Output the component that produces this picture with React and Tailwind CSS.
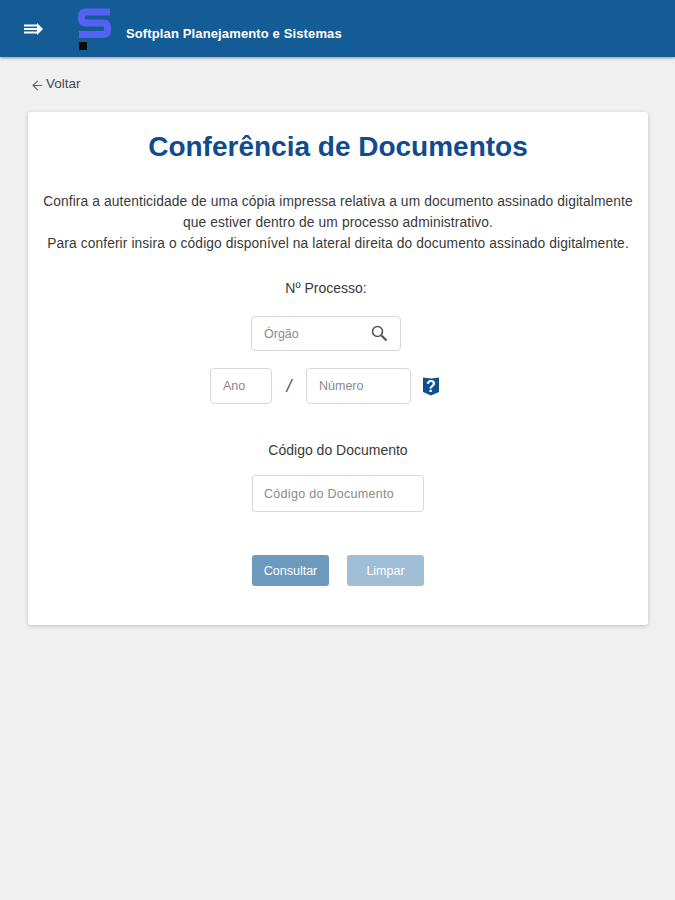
import { ArrowLeft } from 'lucide-react';

function Logo() {
  return (
    <svg width="36" height="45" viewBox="0 0 36 45" className="shrink-0">
      <path d="M34 6H10Q5.500 6 5.500 10.500V12.500Q5.500 17 10 17H27Q31.500 17 31.500 21.500V24Q31.500 28.500 27 28.500H3" fill="none" stroke="#5560f5" strokeWidth="7" />
      <rect x="3" y="36" width="8" height="8" fill="#0a0a0a" />
    </svg>
  );
}

function MenuIcon() {
  return (
    <svg width="20" height="15" viewBox="0 0 20 15" className="shrink-0">
      <path d="M1 4.500h13M1 8h14M1 11.500h13" stroke="#fff" strokeWidth="2" fill="none" />
      <path d="M14 2l6 6-6 6z" fill="#fff" />
    </svg>
  );
}

function HelpIcon() {
  return (
    <svg width="18" height="20" viewBox="0 0 18 20" className="shrink-0">
      <path d="M1 1.500 9 2.500l8-1V16l-8 3.500L1 16z" fill="#10508f" />
      <text x="9" y="15.500" textAnchor="middle" fontSize="16" fontWeight="700" fill="#fff" fontFamily="Liberation Sans, sans-serif">?</text>
    </svg>
  );
}

function SearchIcon() {
  return (
    <svg width="17" height="17" viewBox="0 0 17 17" className="shrink-0">
      <circle cx="6.500" cy="6.500" r="5" fill="none" stroke="#555" strokeWidth="1.600" />
      <path d="M10.500 10.500 15.500 15.500" stroke="#555" strokeWidth="2.200" />
    </svg>
  );
}

export default function App() {
  return (
    <div className="min-h-[900px] bg-[#f0f0f0] font-['Liberation_Sans',Arial,sans-serif] text-[#3a3a3a]">
      <header className="flex h-[57px] items-center bg-[#135c96] pl-[23px] shadow-[0_1px_3px_rgba(0,0,0,0.4)]">
        <MenuIcon />
        <div className="ml-[33px]">
          <Logo />
        </div>
        <span className="ml-[14px] mt-[10px] text-[13px] font-bold tracking-[0.13px] text-white">
          Softplan Planejamento e Sistemas
        </span>
      </header>

      <div className="pt-[18px] pr-[27px] pl-[28px]">
        <div className="flex h-[18px] items-center gap-[1px] pl-[2px] text-[#4a4a4a]">
          <ArrowLeft size={15} strokeWidth={1.7} className="mt-[2px] text-[#666]" />
          <span className="text-[13.5px]">Voltar</span>
        </div>

        <main className="mt-[19px] flex h-[513px] flex-col items-center rounded-[3px] bg-white pt-[17px] shadow-[0_1px_4px_rgba(0,0,0,0.2)]">
          <h1 className="text-[28px] leading-[36px] font-bold text-[#0f4c8f]">Conferência de Documentos</h1>

          <div className="mt-[26px] text-center text-[13.800px] leading-[21px] tracking-[0.1px]">
            <p>Confira a autenticidade de uma cópia impressa relativa a um documento assinado digitalmente</p>
            <p>que estiver dentro de um processo administrativo.</p>
            <p>Para conferir insira o código disponível na lateral direita do documento assinado digitalmente.</p>
          </div>

          <p className="mt-[25px] mr-[24px] text-sm leading-[18px]">Nº Processo:</p>

          <div className="mt-[19px] mr-[24px] flex h-[35px] w-[150px] items-center justify-between rounded-[4px] border border-[#d8d8d8] pr-[12px] pl-[12px] text-[12.500px] text-[#8a8a8a]">
            <span className="pt-[2px]">Órgão</span>
            <SearchIcon />
          </div>

          <div className="mt-[17px] mr-[26px] flex items-center">
            <div className="flex h-[36px] w-[62px] items-center rounded-[4px] border border-[#d8d8d8] pt-[1px] pl-[12px] text-[12.500px] text-[#8a8a8a]">Ano</div>
            <span className="w-[34px] text-center text-lg italic text-[#555]">/</span>
            <div className="flex h-[36px] w-[105px] items-center rounded-[4px] border border-[#d8d8d8] pt-[1px] pl-[12px] text-[12.500px] text-[#8a8a8a]">Número</div>
            <div className="ml-[11px]">
              <HelpIcon />
            </div>
          </div>

          <p className="mt-[37px] text-sm leading-[18px]">Código do Documento</p>

          <div className="mt-[16px] flex h-[37px] w-[172px] items-center rounded-[3px] border border-[#d8d8d8] pt-[1px] pl-[11px] text-[12.500px] tracking-[0.3px] text-[#8a8a8a]">
            Código do Documento
          </div>

          <div className="mt-[43px] flex gap-[18px]">
            <button className="h-[31px] w-[77px] rounded-[3px] bg-[#6c9abf] pt-[2px] text-[12.500px] text-white">Consultar</button>
            <button className="h-[31px] w-[77px] rounded-[3px] bg-[#a0bed6] pt-[2px] text-[12.500px] text-white">Limpar</button>
          </div>
        </main>
      </div>
    </div>
  );
}
